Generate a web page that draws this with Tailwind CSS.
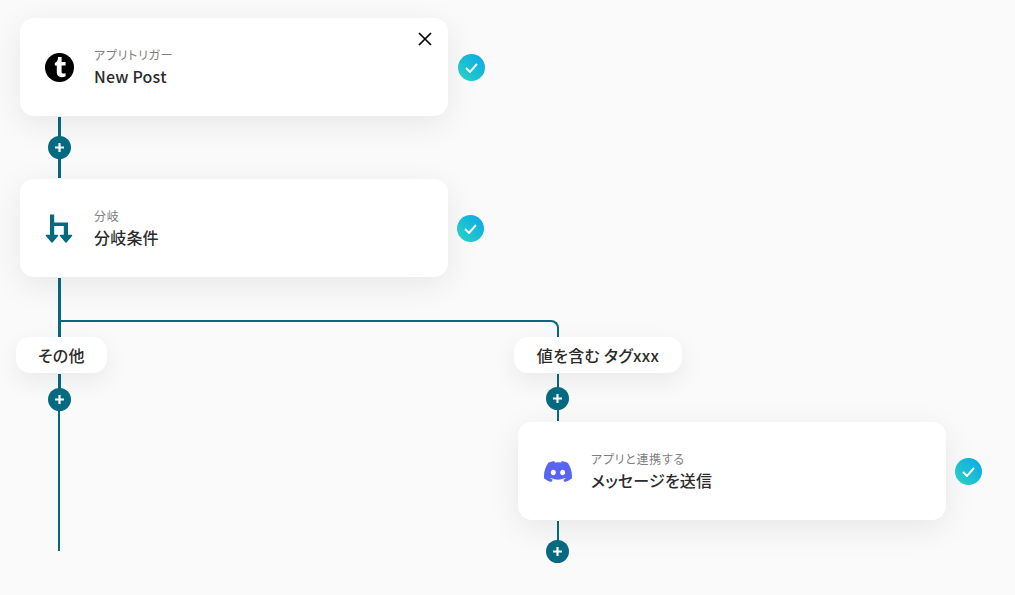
<!DOCTYPE html>
<html lang="ja">
<head>
    <meta charset="UTF-8">
    <meta name="viewport" content="width=device-width, initial-scale=1.0">
    <title>Flow</title>
    <script src="https://cdn.jsdelivr.net/npm/@tailwindcss/browser@4"></script>
</head>
<body class="bg-[#fafafa] font-['Noto_Sans_CJK_JP','Noto_Sans',sans-serif] text-[#2b2b2b] [font-feature-settings:'palt']">
    <div class="relative w-[1015px] h-[595px] overflow-hidden">

        <!-- connector lines -->
        <div class="absolute left-[58px] top-[117px] w-[3px] h-[61px] bg-[#05697f]"></div>
        <div class="absolute left-[58px] top-[278px] w-[3px] h-[59px] bg-[#05697f]"></div>
        <div class="absolute left-[58px] top-[374px] w-[3px] h-[29px] bg-[#05697f]"></div>
        <div class="absolute left-[58px] top-[400px] w-[2px] h-[151px] bg-[#05697f]"></div>
        <div class="absolute left-[60px] top-[320px] w-[499px] h-[17px] border-t-2 border-r-2 border-[#05697f] rounded-tr-[8px]"></div>
        <div class="absolute left-[557px] top-[374px] w-[2px] h-[47px] bg-[#05697f]"></div>
        <div class="absolute left-[557px] top-[521px] w-[2px] h-[23px] bg-[#05697f]"></div>

        <!-- trigger card -->
        <div class="absolute left-[20px] top-[18px] w-[428px] h-[98px] bg-white rounded-[14px] shadow-[0_8px_32px_rgba(0,0,0,0.08)] flex items-center pl-[25px]">
            <svg class="w-[29px] h-[29px] mr-[20px] shrink-0" viewBox="0 0 29 29">
                <circle cx="14.5" cy="14.5" r="14.5" fill="#000"/>
                <path d="M13 4h3.600v5h4v3.400h-4v6.500c0 1.600 1.300 2 4 1.300v3c-1.200.7-2.500 1-3.800 1-3.200 0-5-1.600-5-4.600v-7.200H9.800v-2.400c1.800-.6 3-2.200 3.200-5z" fill="#fff"/>
            </svg>
            <div class="flex flex-col mt-[-1px]">
                <span class="text-[12px] leading-[18px] tracking-[0.7px] text-[#808080]">アプリトリガー</span>
                <span class="text-[16px] leading-[24px] font-medium tracking-[0.2px]">New Post</span>
            </div>
            <svg class="absolute left-[398px] top-[14px] w-[14px] h-[14px]" viewBox="0 0 14 14" fill="none" stroke="#000" stroke-width="1.700">
                <path d="M1 1l12 12M13 1L1 13"/>
            </svg>
        </div>

        <!-- branch card -->
        <div class="absolute left-[20px] top-[179px] w-[428px] h-[98px] bg-white rounded-[14px] shadow-[0_8px_32px_rgba(0,0,0,0.08)] flex items-center pl-[25px]">
            <svg class="w-[29px] h-[29px] mr-[20px] shrink-0" viewBox="0 0 29 29" fill="#05697f">
                <path d="M5 .5h4.200v8H23V22h-4.200V12H9.200v10H5z"/>
                <path d="M1.500 21.500h11L7 28zM15.500 21.500h11L21 28z" stroke="#05697f" stroke-width="1.500" stroke-linejoin="round"/>
            </svg>
            <div class="flex flex-col mt-[-1px]">
                <span class="text-[12px] leading-[18px] tracking-[0.7px] text-[#808080]">分岐</span>
                <span class="text-[16px] leading-[24px] font-medium tracking-[0.2px]">分岐条件</span>
            </div>
        </div>

        <!-- discord card -->
        <div class="absolute left-[518px] top-[422px] w-[428px] h-[98px] bg-white rounded-[14px] shadow-[0_8px_32px_rgba(0,0,0,0.08)] flex items-center pl-[26px]">
            <svg class="w-[28px] h-[29px] mr-[19px] shrink-0" viewBox="0 0 127.140 96.360" fill="#5865f2">
                <path d="M107.700 8.070A105.150 105.150 0 0 0 81.470 0a72.060 72.060 0 0 0-3.360 6.830 97.680 97.680 0 0 0-29.110 0A72.370 72.370 0 0 0 45.640 0a105.890 105.890 0 0 0-26.250 8.090C2.790 32.650-1.710 56.600.54 80.210a105.730 105.730 0 0 0 32.170 16.150 77.700 77.700 0 0 0 6.890-11.110 68.420 68.420 0 0 1-10.850-5.180c.91-.66 1.800-1.340 2.660-2a75.570 75.570 0 0 0 64.320 0c.87.710 1.760 1.390 2.660 2a68.680 68.680 0 0 1-10.870 5.190 77 77 0 0 0 6.890 11.100 105.250 105.250 0 0 0 32.190-16.140c2.640-27.380-4.510-51.110-18.900-72.150zM42.450 65.690C36.180 65.690 31 60 31 53s5-12.740 11.430-12.740S54 46 53.890 53s-5.050 12.690-11.440 12.690zm42.240 0C78.410 65.690 73.250 60 73.250 53s5-12.740 11.440-12.740S96.230 46 96.120 53s-5.040 12.690-11.430 12.690z"/>
            </svg>
            <div class="flex flex-col mt-[-1px]">
                <span class="text-[12px] leading-[18px] tracking-[0.7px] text-[#808080]">アプリと連携する</span>
                <span class="text-[16px] leading-[24px] font-medium tracking-[0.2px]">メッセージを送信</span>
            </div>
        </div>

        <!-- branch labels -->
        <div class="absolute left-[16px] top-[337px] w-[91px] h-[36px] bg-white rounded-[14px] shadow-[0_8px_24px_rgba(0,0,0,0.07)] flex items-center justify-center text-[16px] font-medium tracking-[0.3px]">その他</div>
        <div class="absolute left-[514px] top-[337px] w-[168px] h-[36px] bg-white rounded-[14px] shadow-[0_8px_24px_rgba(0,0,0,0.07)] flex items-center justify-center text-[16px] font-medium tracking-[0.3px]">値を含む タグxxx</div>

        <!-- add buttons -->
        <div class="absolute left-[48px] top-[136px] w-[23px] h-[23px] rounded-full bg-[#05697f] flex items-center justify-center">
            <svg class="w-[9px] h-[9px]" viewBox="0 0 9 9" stroke="#fff" stroke-width="2.200"><path d="M4.500 0v9M0 4.500h9"/></svg>
        </div>
        <div class="absolute left-[48px] top-[388px] w-[23px] h-[23px] rounded-full bg-[#05697f] flex items-center justify-center">
            <svg class="w-[9px] h-[9px]" viewBox="0 0 9 9" stroke="#fff" stroke-width="2.200"><path d="M4.500 0v9M0 4.500h9"/></svg>
        </div>
        <div class="absolute left-[546px] top-[387px] w-[23px] h-[23px] rounded-full bg-[#05697f] flex items-center justify-center">
            <svg class="w-[9px] h-[9px]" viewBox="0 0 9 9" stroke="#fff" stroke-width="2.200"><path d="M4.500 0v9M0 4.500h9"/></svg>
        </div>
        <div class="absolute left-[546px] top-[540px] w-[23px] h-[23px] rounded-full bg-[#05697f] flex items-center justify-center">
            <svg class="w-[9px] h-[9px]" viewBox="0 0 9 9" stroke="#fff" stroke-width="2.200"><path d="M4.500 0v9M0 4.500h9"/></svg>
        </div>

        <!-- status checks -->
        <div class="absolute left-[458px] top-[54px] w-[27px] h-[27px] rounded-full bg-gradient-to-tr from-[#2dd4bf] to-[#0ea5e9] flex items-center justify-center">
            <svg class="w-[13px] h-[10px]" viewBox="0 0 13 10" fill="none" stroke="#fff" stroke-width="1.900"><path d="M1 5l4 4 7-8"/></svg>
        </div>
        <div class="absolute left-[457px] top-[215px] w-[27px] h-[27px] rounded-full bg-gradient-to-tr from-[#2dd4bf] to-[#0ea5e9] flex items-center justify-center">
            <svg class="w-[13px] h-[10px]" viewBox="0 0 13 10" fill="none" stroke="#fff" stroke-width="1.900"><path d="M1 5l4 4 7-8"/></svg>
        </div>
        <div class="absolute left-[955px] top-[458px] w-[27px] h-[27px] rounded-full bg-gradient-to-tr from-[#2dd4bf] to-[#0ea5e9] flex items-center justify-center">
            <svg class="w-[13px] h-[10px]" viewBox="0 0 13 10" fill="none" stroke="#fff" stroke-width="1.900"><path d="M1 5l4 4 7-8"/></svg>
        </div>
    </div>
</body>
</html>
